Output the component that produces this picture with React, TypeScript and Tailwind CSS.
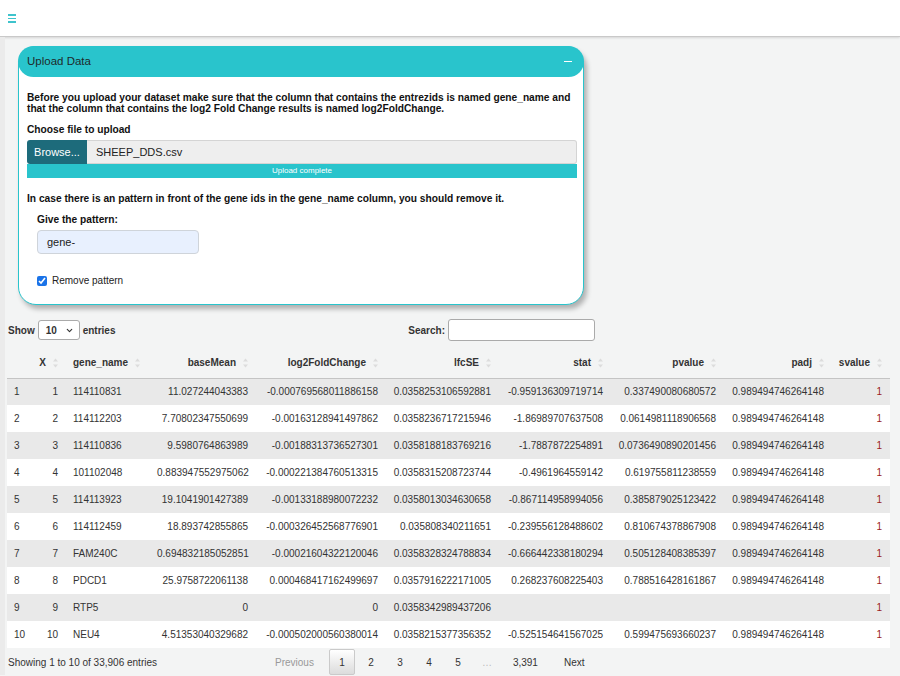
import { ChevronDown } from "lucide-react";

type Row = (string | number)[];

const rows: Row[] = [
  [1, 1, "114110831", "11.027244043383", "-0.000769568011886158", "0.0358253106592881", "-0.959136309719714", "0.337490080680572", "0.989494746264148", 1],
  [2, 2, "114112203", "7.70802347550699", "-0.00163128941497862", "0.0358236717215946", "-1.86989707637508", "0.0614981118906568", "0.989494746264148", 1],
  [3, 3, "114110836", "9.5980764863989", "-0.00188313736527301", "0.0358188183769216", "-1.7887872254891", "0.0736490890201456", "0.989494746264148", 1],
  [4, 4, "101102048", "0.883947552975062", "-0.000221384760513315", "0.0358315208723744", "-0.4961964559142", "0.619755811238559", "0.989494746264148", 1],
  [5, 5, "114113923", "19.1041901427389", "-0.00133188980072232", "0.0358013034630658", "-0.867114958994056", "0.385879025123422", "0.989494746264148", 1],
  [6, 6, "114112459", "18.893742855865", "-0.000326452568776901", "0.035808340211651", "-0.239556128488602", "0.810674378867908", "0.989494746264148", 1],
  [7, 7, "FAM240C", "0.694832185052851", "-0.00021604322120046", "0.0358328324788834", "-0.666442338180294", "0.505128408385397", "0.989494746264148", 1],
  [8, 8, "PDCD1", "25.9758722061138", "0.000468417162499697", "0.0357916222171005", "0.268237608225403", "0.788516428161867", "0.989494746264148", 1],
  [9, 9, "RTP5", "0", "0", "0.0358342989437206", "", "", "", 1],
  [10, 10, "NEU4", "4.51353040329682", "-0.000502000560380014", "0.0358215377356352", "-0.525154641567025", "0.599475693660237", "0.989494746264148", 1],
];

const columns = [
  { label: "", width: 28, align: "left" },
  { label: "X", width: 31, align: "right" },
  { label: "gene_name", width: 91, align: "left" },
  { label: "baseMean", width: 99, align: "right" },
  { label: "log2FoldChange", width: 130, align: "right" },
  { label: "lfcSE", width: 113, align: "right" },
  { label: "stat", width: 112, align: "right" },
  { label: "pvalue", width: 113, align: "right" },
  { label: "padj", width: 108, align: "right" },
  { label: "svalue", width: 58, align: "right" },
];

function SortIcon() {
  return (
    <svg width="5" height="10" viewBox="0 0 5 10" className="shrink-0">
      <path d="M2.5 0.5 L5 3.5 L0 3.5 Z" fill="#dcdcdc" />
      <path d="M2.5 9.5 L5 6.5 L0 6.5 Z" fill="#dcdcdc" />
    </svg>
  );
}

function UploadBox() {
  return (
    <section className="ml-[13px] mt-[9px] w-[566px] rounded-[18px] border border-[#29c4cc] bg-white shadow-[3px_4px_5px_rgba(0,0,0,0.28)]">
      {/* header pill */}
      <div className="-m-px flex h-[31px] items-center justify-between rounded-[18px] bg-[#29c4cc] pl-[9px] pr-[12px]">
        <span className="text-[11.5px] text-[#1f2a2b]">Upload Data</span>
        <span className="h-[1.5px] w-[8px] bg-white" />
      </div>

      <div className="px-[8px] pb-[18px] pt-[16px] text-[10.2px] text-[#111]">
        <p className="font-bold leading-[11px]">
          Before you upload your dataset make sure that the column that contains the entrezids is named gene_name and
          that the column that contains the log2 Fold Change results is named log2FoldChange.
        </p>

        <p className="mt-[10px] font-bold leading-[11px]">Choose file to upload</p>

        <div className="mt-[5px] flex h-[24px] w-[550px]">
          <div className="flex w-[60px] items-center justify-center rounded-l-[3px] bg-[#1d6b7b] text-[11px] text-white">
            Browse...
          </div>
          <div className="flex flex-1 items-center rounded-r-[3px] border border-l-0 border-[#d4d4d4] bg-[#eeeeee] pl-[9px] text-[11px] text-[#222]">
            SHEEP_DDS.csv
          </div>
        </div>
        <div className="flex h-[14px] w-[550px] items-center justify-center bg-[#29c4cc] text-[8px] text-white">
          Upload complete
        </div>

        <p className="mt-[15px] font-bold leading-[11px]">
          In case there is an pattern in front of the gene ids in the gene_name column, you should remove it.
        </p>

        <div className="pl-[10px]">
          <p className="mt-[10px] font-bold leading-[11px]">Give the pattern:</p>
          <div className="mt-[5px] flex h-[24px] w-[162px] items-center rounded-[4px] border border-[#cfd4da] bg-[#e8f0fe] pl-[9px] text-[11px] text-[#222]">
            gene-
          </div>
          <label className="mt-[21px] flex items-center gap-[5px] text-[10px] leading-[11px] text-[#222]">
            <input type="checkbox" checked readOnly className="m-0 h-[10px] w-[10px] accent-[#1a73e8]" />
            Remove pattern
          </label>
        </div>
      </div>
    </section>
  );
}

function DataTable() {
  return (
    <div className="ml-[2px] mt-[14px] w-[883px] text-[10px] text-[#333]">
      {/* controls */}
      <div className="flex h-[22px] w-[588px] items-center justify-between">
        <div className="flex items-center font-bold">
          <span className="pl-[1px]">Show</span>
          <div className="ml-[3px] mr-[3px] flex h-[20px] w-[42px] items-center justify-between rounded-[3px] border border-[#aaa] bg-white pl-[7px] pr-[5px]">
            <span>10</span>
            <ChevronDown size={9} strokeWidth={3} />
          </div>
          <span>entries</span>
        </div>
        <div className="flex items-center font-bold">
          <span>Search:</span>
          <div className="ml-[3px] h-[22px] w-[147px] rounded-[3px] border border-[#aaa] bg-white" />
        </div>
      </div>

      <table className="mt-[7px] w-[883px] table-fixed border-collapse">
        <colgroup>
          {columns.map((c, i) => (
            <col key={i} style={{ width: c.width }} />
          ))}
        </colgroup>
        <thead>
          <tr className="h-[30px] border-b border-[#c4c4c4]">
            {columns.map((c, i) => (
              <th key={i} className="p-0 pr-[8px] font-bold">
                {c.label && (
                  <div className={`flex items-center gap-[7px] ${c.align === "right" ? "justify-end" : "justify-start pl-[7px]"}`}>
                    <span>{c.label}</span>
                    <SortIcon />
                  </div>
                )}
              </th>
            ))}
          </tr>
        </thead>
        <tbody>
          {rows.map((r, ri) => (
            <tr key={ri} className={`h-[27px] ${ri % 2 === 0 ? "bg-[#e9e9e9]" : "bg-white"}`}>
              {r.map((v, ci) => (
                <td
                  key={ci}
                  className={`whitespace-nowrap p-0 ${
                    columns[ci].align === "right" ? "pr-[8px] text-right" : "pl-[7px] text-left"
                  } ${ci === 9 ? "text-[#9b1c1c]" : ""}`}
                >
                  {v}
                </td>
              ))}
            </tr>
          ))}
        </tbody>
      </table>

      {/* footer */}
      <div className="mt-[1px] flex h-[26px] items-center">
        <span className="w-[256px] pl-[1px]">Showing 1 to 10 of 33,906 entries</span>
        <div className="flex items-center gap-[3px]">
          <span className="px-[12px] text-[#999]">Previous</span>
          <span className="flex h-[26px] w-[26px] items-center justify-center rounded-[2px] border border-[#cacaca] bg-gradient-to-b from-white to-[#dcdcdc]">
            1
          </span>
          {["2", "3", "4", "5"].map((p) => (
            <span key={p} className="flex h-[26px] w-[26px] items-center justify-center">
              {p}
            </span>
          ))}
          <span className="flex h-[26px] w-[26px] items-center justify-center text-[#bbb]">…</span>
          <span className="px-[10px]">3,391</span>
          <span className="px-[13px]">Next</span>
        </div>
      </div>
    </div>
  );
}

export default function App() {
  return (
    <div className="relative h-[676px] w-[900px] overflow-hidden bg-[#f3f4f4] font-['Liberation_Sans',Arial,sans-serif]">
      {/* top bar */}
      <header className="flex h-[37px] items-start border-b border-[#c9c9c9] bg-white pl-[8px] pt-[14px] shadow-[0_1px_2px_rgba(0,0,0,0.12)]">
        <div className="flex flex-col gap-[2px]">
          <span className="h-[1.5px] w-[8px] bg-[#3ec3cc]" />
          <span className="h-[1.5px] w-[8px] bg-[#3ec3cc]" />
          <span className="h-[1.5px] w-[8px] bg-[#3ec3cc]" />
        </div>
      </header>

      <div className="flex">
        <div className="w-[5px] self-stretch bg-[#ebebeb]" />
        <main className="flex-1">
          <UploadBox />
          <DataTable />
        </main>
      </div>
    </div>
  );
}
